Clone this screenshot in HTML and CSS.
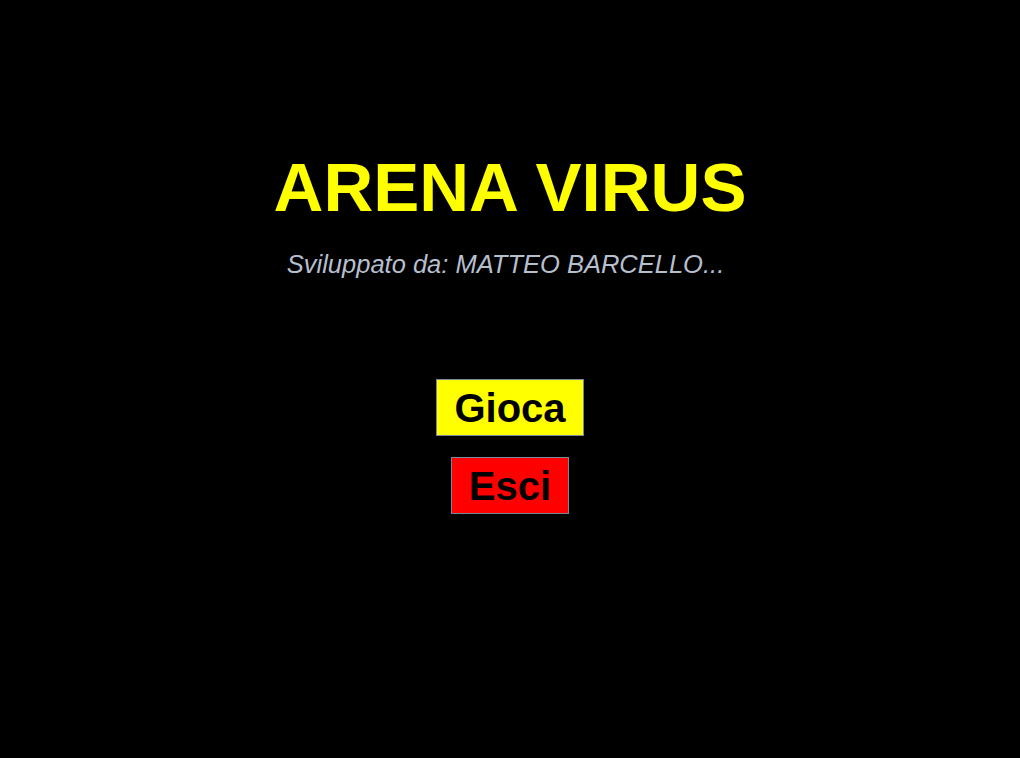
FILE: index.html
```html
<!DOCTYPE html>
<html lang="it">
<head>
<meta charset="utf-8">
<title>Arena Virus</title>
<link rel="stylesheet" href="styles.css">
</head>
<body>
<main class="menu">
  <h1 class="title">ARENA VIRUS</h1>
  <p class="credits">Sviluppato da: MATTEO BARCELLO...</p>
  <div class="buttons">
    <button class="btn btn-play">Gioca</button>
    <button class="btn btn-exit">Esci</button>
  </div>
</main>
</body>
</html>
```
FILE: styles.css
```css
html, body {
  margin: 0;
  padding: 0;
  background: #000;
  height: 100%;
}
body {
  font-family: "Liberation Sans", Arial, sans-serif;
}
.menu {
  display: flex;
  flex-direction: column;
  align-items: center;
  padding-top: 153px;
}
.title {
  margin: 0;
  font-size: 69px;
  line-height: 70px;
  font-weight: bold;
  color: #ffff00;
  letter-spacing: 0;
}
.credits {
  margin: 28px 0 0;
  padding-right: 9px;
  font-size: 25.5px;
  line-height: 26px;
  font-style: italic;
  color: #b6bfce;
}
.buttons {
  margin-top: 102px;
  display: flex;
  flex-direction: column;
  align-items: center;
  gap: 21px;
}
.btn {
  font-family: "Liberation Sans", Arial, sans-serif;
  font-size: 40px;
  line-height: 40px;
  font-weight: bold;
  color: #000;
  border: 1px solid #778899;
  padding: 7.5px 17px 7.5px;
  margin: 0;
  border-radius: 0;
}
.btn-play {
  background: #ffff00;
}
.btn-exit {
  background: #ff0000;
}
```
